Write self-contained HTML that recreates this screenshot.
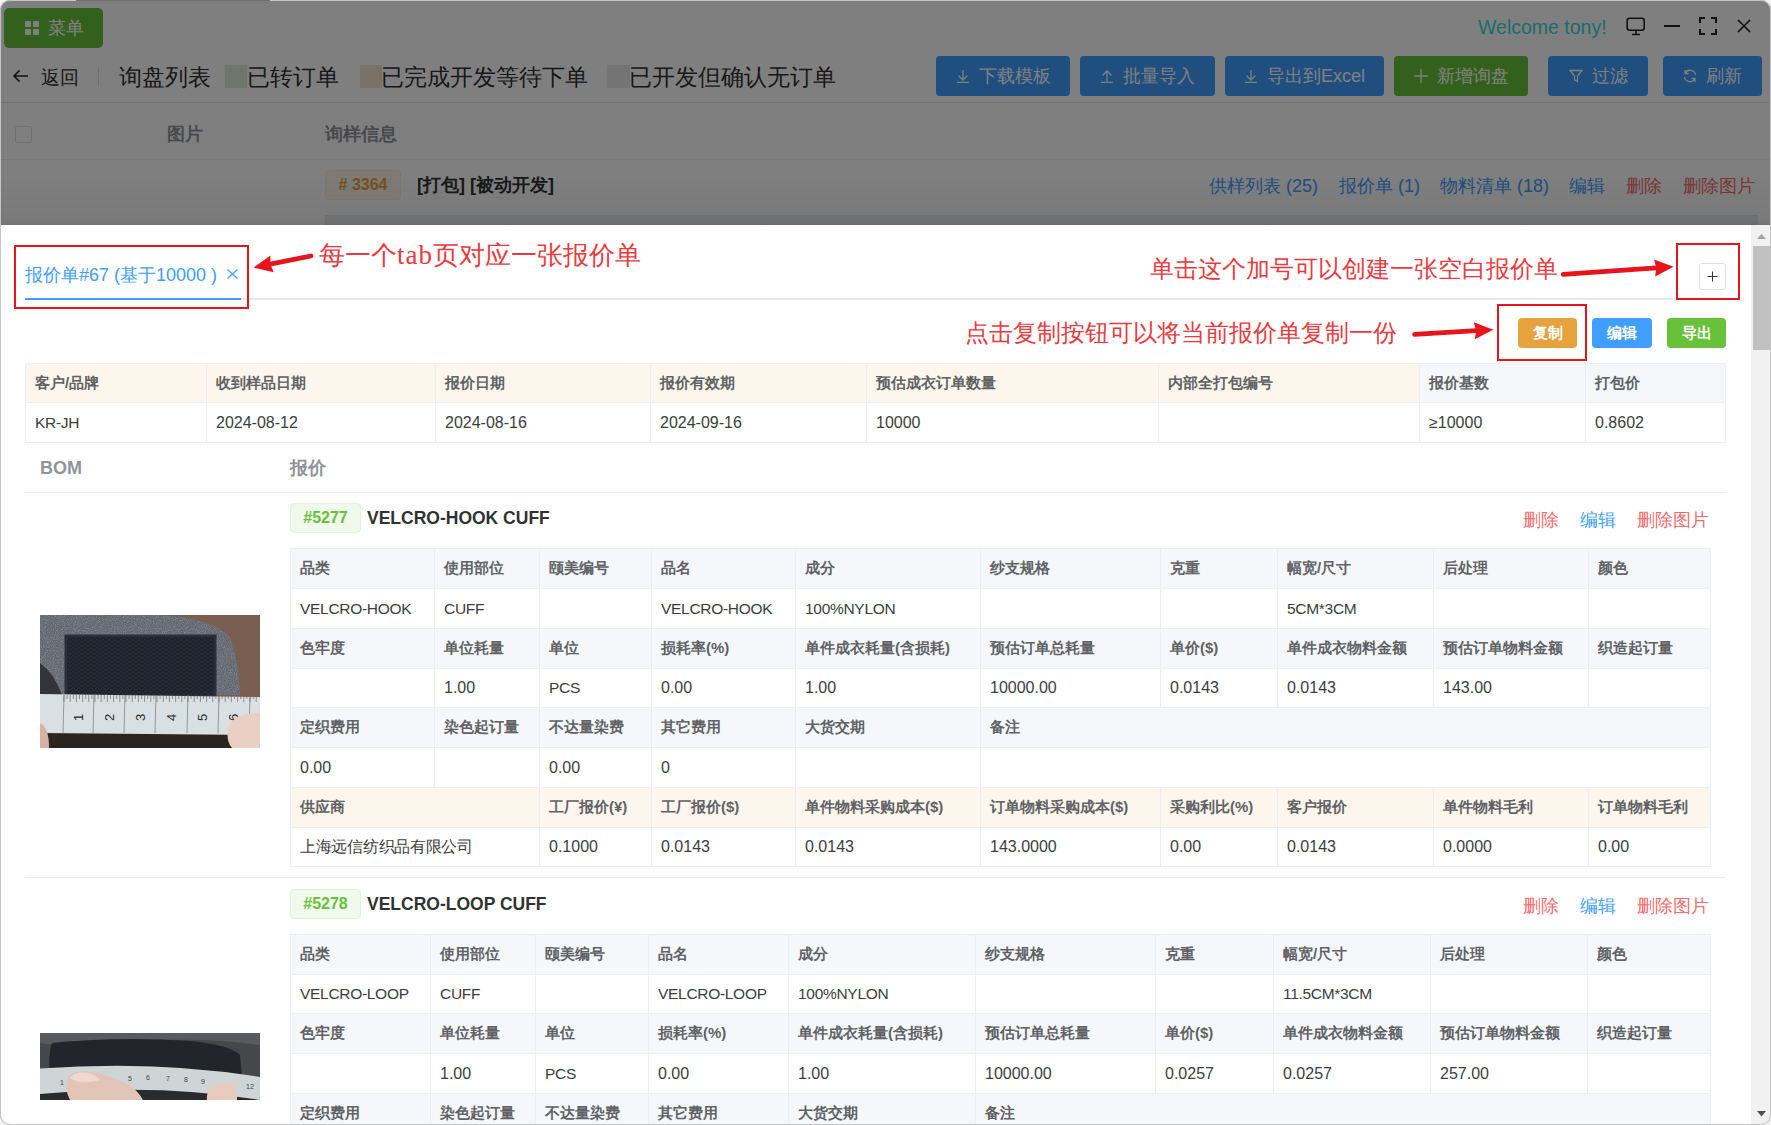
<!DOCTYPE html><html><head><meta charset="utf-8"><style>
*{box-sizing:border-box;margin:0;padding:0}
html,body{width:1771px;height:1125px;overflow:hidden;background:#f2f2f2;font-family:"Liberation Sans",sans-serif}
.abs{position:absolute}
#win{position:absolute;left:0;top:0;width:1771px;height:1125px;border-radius:10px;overflow:hidden;background:#fff}
#frame{position:absolute;left:0;top:0;width:1771px;height:1125px;border:1px solid #c4c4c4;border-radius:10px}
.t{position:absolute;white-space:nowrap;line-height:1}
.btn{position:absolute;border-radius:4px;color:#fff;display:flex;align-items:center;justify-content:center;font-size:18px;white-space:nowrap}
.cell{position:absolute;display:flex;align-items:center;white-space:nowrap;overflow:hidden;color:#606266;padding-left:9px}
.hd{font-weight:bold;font-size:15px}
.dt{font-size:16px}
.lnk{position:absolute;font-size:18px;white-space:nowrap;line-height:1}
</style></head><body>
<div id="win">
<div class="btn" style="left:4px;top:8px;width:99px;height:40px;background:#67c23a;border-radius:5px;justify-content:flex-start;padding-left:21px"><svg width="14" height="14" style="margin-right:9px"><rect x="0" y="0" width="6" height="6" rx="1" fill="#fff"/><rect x="8" y="0" width="6" height="6" rx="1" fill="#fff"/><rect x="0" y="8" width="6" height="6" rx="1" fill="#fff"/><rect x="8" y="8" width="6" height="6" rx="1" fill="#fff"/></svg><span style="font-size:18px">菜单</span></div>
<div class="t" style="left:1478px;top:18px;font-size:19.5px;color:#3ad9db">Welcome tony!</div>
<svg class="abs" style="left:12px;top:69px" width="17" height="14"><path d="M16 7H2M7.5 1.5L2 7l5.5 5.5" stroke="#222" stroke-width="1.6" fill="none"/></svg>
<div class="t" style="left:41px;top:68px;font-size:19px;color:#303133">返回</div>
<div class="abs" style="left:98px;top:67px;width:1px;height:19px;background:#dcdfe6"></div>
<div class="t" style="left:119px;top:66px;font-size:23px;color:#303133">询盘列表</div>
<div class="abs" style="left:225px;top:65px;width:22px;height:23px;background:#d9f0d3"></div>
<div class="t" style="left:247px;top:66px;font-size:23px;color:#303133">已转订单</div>
<div class="abs" style="left:360px;top:65px;width:22px;height:23px;background:#f5e5d2"></div>
<div class="t" style="left:381px;top:66px;font-size:23px;color:#303133">已完成开发等待下单</div>
<div class="abs" style="left:607px;top:65px;width:23px;height:23px;background:#e8e8e8"></div>
<div class="t" style="left:629px;top:66px;font-size:23px;color:#303133">已开发但确认无订单</div>
<div class="btn" style="left:936px;top:56px;width:134px;height:40px;background:#409eff"><svg width="14" height="14" style="margin-right:9px"><path d="M7 1v10M2.5 6.5L7 11l4.5-4.5M1 13.3h12" stroke="#fff" stroke-width="1.3" fill="none"/></svg><span>下载模板</span></div>
<div class="btn" style="left:1080px;top:56px;width:135px;height:40px;background:#409eff"><svg width="14" height="14" style="margin-right:9px"><path d="M7 12.5V2M2.5 6.5L7 2l4.5 4.5M1 13.3h12" stroke="#fff" stroke-width="1.3" fill="none"/></svg><span>批量导入</span></div>
<div class="btn" style="left:1225px;top:56px;width:159px;height:40px;background:#409eff"><svg width="14" height="14" style="margin-right:9px"><path d="M7 1v10M2.5 6.5L7 11l4.5-4.5M1 13.3h12" stroke="#fff" stroke-width="1.3" fill="none"/></svg><span>导出到Excel</span></div>
<div class="btn" style="left:1394px;top:56px;width:134px;height:40px;background:#67c23a"><svg width="14" height="14" style="margin-right:9px"><path d="M7 0v14M0 7h14" stroke="#fff" stroke-width="1.3"/></svg><span>新增询盘</span></div>
<div class="btn" style="left:1548px;top:56px;width:100px;height:40px;background:#409eff"><svg width="14" height="14" style="margin-right:9px"><path d="M1 1.5h12L8.5 7v5.5l-3-1.5V7z" stroke="#fff" stroke-width="1.3" fill="none" stroke-linejoin="round"/></svg><span>过滤</span></div>
<div class="btn" style="left:1663px;top:56px;width:99px;height:40px;background:#409eff"><svg width="14" height="14" style="margin-right:9px"><path d="M12.5 6A5.5 5.5 0 0 0 2.2 4.2M1.5 8a5.5 5.5 0 0 0 10.3 1.8M2 1v3.5h3.5M12 13V9.5H8.5" stroke="#fff" stroke-width="1.3" fill="none"/></svg><span>刷新</span></div>
<div class="abs" style="left:0;top:102px;width:1771px;height:1px;background:#e4e4e4"></div>
<div class="abs" style="left:15px;top:126px;width:17px;height:17px;border:1px solid #dcdfe6;border-radius:2px;background:#fff"></div>
<div class="t" style="left:167px;top:125px;font-size:18px;font-weight:bold;color:#909399">图片</div>
<div class="t" style="left:325px;top:125px;font-size:18px;font-weight:bold;color:#909399">询样信息</div>
<div class="abs" style="left:0;top:159px;width:1771px;height:1px;background:#ebeef5"></div>
<div class="abs" style="left:325px;top:170px;width:76px;height:30px;background:#fdf6ec;border:1px solid #faecd8;border-radius:4px;color:#e6a23c;font-weight:bold;font-size:16px;display:flex;align-items:center;justify-content:center"># 3364</div>
<div class="t" style="left:417px;top:176px;font-size:18px;font-weight:bold;color:#303133">[打包] [被动开发]</div>
<div class="lnk" style="left:1209px;top:177px;color:#409eff">供样列表 (25)</div>
<div class="lnk" style="left:1339px;top:177px;color:#409eff">报价单 (1)</div>
<div class="lnk" style="left:1440px;top:177px;color:#409eff">物料清单 (18)</div>
<div class="lnk" style="left:1569px;top:177px;color:#409eff">编辑</div>
<div class="lnk" style="left:1626px;top:177px;color:#f56c6c">删除</div>
<div class="lnk" style="left:1683px;top:177px;color:#f56c6c">删除图片</div>
<div class="abs" style="left:325px;top:215px;width:1433px;height:12px;background:#eaecf0;border-top:1px solid #e4e6eb"></div>
<div class="abs" style="left:481px;top:215px;width:1px;height:12px;background:#ebeef5"></div>
<div class="abs" style="left:623px;top:215px;width:1px;height:12px;background:#ebeef5"></div>
<div class="abs" style="left:792px;top:215px;width:1px;height:12px;background:#ebeef5"></div>
<div class="abs" style="left:1017px;top:215px;width:1px;height:12px;background:#ebeef5"></div>
<div class="abs" style="left:1202px;top:215px;width:1px;height:12px;background:#ebeef5"></div>
<div class="abs" style="left:1387px;top:215px;width:1px;height:12px;background:#ebeef5"></div>
<div class="abs" style="left:1572px;top:215px;width:1px;height:12px;background:#ebeef5"></div>
<div class="abs" style="left:0;top:0;width:1771px;height:1125px;background:rgba(0,0,0,.5)"></div>
<svg class="abs" style="left:1626px;top:17px" width="20" height="19"><rect x="1.2" y="1.2" width="17" height="12" rx="2.5" stroke="#111" stroke-width="1.6" fill="none"/><path d="M10 13.5v3.5M6 17.5h8" stroke="#111" stroke-width="1.6"/></svg>
<div class="abs" style="left:1664px;top:25px;width:16px;height:2px;background:#111"></div>
<svg class="abs" style="left:1699px;top:17px" width="18" height="18"><path d="M1 6V1h5M12 1h5v5M17 12v5h-5M6 17H1v-5" stroke="#111" stroke-width="2" fill="none"/></svg>
<svg class="abs" style="left:1737px;top:19px" width="14" height="14"><path d="M1 1l12 12M13 1L1 13" stroke="#111" stroke-width="1.7"/></svg>
<div class="abs" style="left:0;top:175px;width:1771px;height:50px;background:linear-gradient(to bottom,rgba(0,0,0,0),rgba(0,0,0,.05))"></div>
<div class="abs" style="left:0;top:225px;width:1771px;height:900px;background:#fff;box-shadow:0 -1px 6px rgba(0,0,0,.08)"></div>
<div class="abs" style="left:1751px;top:225px;width:20px;height:900px;background:#f1f1f1"></div>
<div class="abs" style="left:1753px;top:246px;width:17px;height:104px;background:#c1c1c1"></div>
<svg class="abs" style="left:1756px;top:233px" width="11" height="8"><path d="M5.5 1L10 6H1z" fill="#a3a3a3"/></svg>
<svg class="abs" style="left:1756px;top:1110px" width="11" height="8"><path d="M1 1h9L5.5 6.5z" fill="#505050"/></svg>
<div class="abs" style="left:25px;top:298px;width:1651px;height:2px;background:#e4e7ed"></div>
<div class="abs" style="left:25px;top:298px;width:216px;height:2px;background:#409eff"></div>
<div class="t" style="left:25px;top:266px;font-size:18px;color:#409eff">报价单#67 (基于10000 )</div>
<svg class="abs" style="left:227px;top:269px" width="11" height="10"><path d="M0.5 0.5l10 9M10.5 0.5l-10 9" stroke="#409eff" stroke-width="1.2"/></svg>
<div class="abs" style="left:1699px;top:263px;width:27px;height:27px;border:1px solid #dcdfe6;border-radius:3px;background:#fff"></div>
<svg class="abs" style="left:1707px;top:271px" width="11" height="11"><path d="M5.5 0.5v10M0.5 5.5h10" stroke="#303133" stroke-width="1"/></svg>
<div class="btn" style="left:1518px;top:318px;width:59px;height:30px;background:#e6a23c;font-size:15px;font-weight:bold;border-radius:4px">复制</div>
<div class="btn" style="left:1592px;top:318px;width:60px;height:30px;background:#409eff;font-size:15px;font-weight:bold;border-radius:4px">编辑</div>
<div class="btn" style="left:1667px;top:318px;width:59px;height:30px;background:#67c23a;font-size:15px;font-weight:bold;border-radius:4px">导出</div>
<div class="abs" style="left:14px;top:245px;width:235px;height:64px;border:2px solid #e8141c"></div>
<div class="abs" style="left:1676px;top:243px;width:64px;height:57px;border:2px solid #e8141c"></div>
<div class="abs" style="left:1497px;top:304px;width:90px;height:57px;border:2px solid #e8141c"></div>
<div class="t" style="left:319px;top:242px;font-size:26px;color:#ea3a40">每一个<span style="font-family:Liberation Serif;font-size:27px;letter-spacing:1px">tab</span>页对应一张报价单</div>
<div class="t" style="left:1150px;top:257px;font-size:24px;color:#ea3a40">单击这个加号可以创建一张空白报价单</div>
<div class="t" style="left:965px;top:321px;font-size:24px;color:#ea3a40">点击复制按钮可以将当前报价单复制一份</div>
<svg class="abs" style="left:0;top:0" width="1771" height="1125"><line x1="311.0" y1="256.0" x2="270.3" y2="264.2" stroke="#e8141c" stroke-width="4.8" stroke-linecap="round"/><polygon points="253.5,267.6 270.4,255.5 270.3,264.2 273.8,272.2" fill="#e8141c"/><line x1="1563.2" y1="274.3" x2="1656.4" y2="267.9" stroke="#e8141c" stroke-width="4.8" stroke-linecap="round"/><polygon points="1673.5,266.7 1655.1,276.5 1656.4,267.9 1654.0,259.5" fill="#e8141c"/><line x1="1414.6" y1="334.3" x2="1476.2" y2="330.7" stroke="#e8141c" stroke-width="4.8" stroke-linecap="round"/><polygon points="1493.3,329.7 1474.8,339.3 1476.2,330.7 1473.8,322.3" fill="#e8141c"/></svg>
<div class="cell" style="left:25px;top:363px;width:182px;height:40px;background:#fdf6ec;border:1px solid #ebeef5;font-weight:bold;font-size:15px;color:#606266">客户/品牌</div><div class="cell" style="left:206px;top:363px;width:230px;height:40px;background:#fdf6ec;border:1px solid #ebeef5;font-weight:bold;font-size:15px;color:#606266">收到样品日期</div><div class="cell" style="left:435px;top:363px;width:216px;height:40px;background:#fdf6ec;border:1px solid #ebeef5;font-weight:bold;font-size:15px;color:#606266">报价日期</div><div class="cell" style="left:650px;top:363px;width:217px;height:40px;background:#fdf6ec;border:1px solid #ebeef5;font-weight:bold;font-size:15px;color:#606266">报价有效期</div><div class="cell" style="left:866px;top:363px;width:293px;height:40px;background:#fdf6ec;border:1px solid #ebeef5;font-weight:bold;font-size:15px;color:#606266">预估成衣订单数量</div><div class="cell" style="left:1158px;top:363px;width:262px;height:40px;background:#fdf6ec;border:1px solid #ebeef5;font-weight:bold;font-size:15px;color:#606266">内部全打包编号</div><div class="cell" style="left:1419px;top:363px;width:167px;height:40px;background:#f5f7fa;border:1px solid #ebeef5;font-weight:bold;font-size:15px;color:#606266">报价基数</div><div class="cell" style="left:1585px;top:363px;width:141px;height:40px;background:#f5f7fa;border:1px solid #ebeef5;font-weight:bold;font-size:15px;color:#606266">打包价</div><div class="cell" style="left:25px;top:402px;width:182px;height:41px;background:#fff;border:1px solid #ebeef5;font-size:15.5px;letter-spacing:-0.3px;color:#3c3d40">KR-JH</div><div class="cell" style="left:206px;top:402px;width:230px;height:41px;background:#fff;border:1px solid #ebeef5;font-size:16px;color:#3c3d40">2024-08-12</div><div class="cell" style="left:435px;top:402px;width:216px;height:41px;background:#fff;border:1px solid #ebeef5;font-size:16px;color:#3c3d40">2024-08-16</div><div class="cell" style="left:650px;top:402px;width:217px;height:41px;background:#fff;border:1px solid #ebeef5;font-size:16px;color:#3c3d40">2024-09-16</div><div class="cell" style="left:866px;top:402px;width:293px;height:41px;background:#fff;border:1px solid #ebeef5;font-size:16px;color:#3c3d40">10000</div><div class="cell" style="left:1158px;top:402px;width:262px;height:41px;background:#fff;border:1px solid #ebeef5;font-size:16px;color:#3c3d40"></div><div class="cell" style="left:1419px;top:402px;width:167px;height:41px;background:#fff;border:1px solid #ebeef5;font-size:16px;color:#3c3d40">≥10000</div><div class="cell" style="left:1585px;top:402px;width:141px;height:41px;background:#fff;border:1px solid #ebeef5;font-size:16px;color:#3c3d40">0.8602</div>
<div class="t" style="left:40px;top:459px;font-size:18px;font-weight:bold;color:#909399">BOM</div>
<div class="t" style="left:290px;top:459px;font-size:18px;font-weight:bold;color:#909399">报价</div>
<div class="abs" style="left:25px;top:492px;width:1701px;height:1px;background:#ebeef5"></div>
<div class="abs" style="left:290px;top:503px;width:71px;height:30px;background:#f0f9eb;border:1px solid #e1f3d8;border-radius:4px;color:#67c23a;font-weight:bold;font-size:16px;display:flex;align-items:center;justify-content:center">#5277</div>
<div class="t" style="left:367px;top:510px;font-size:17.5px;font-weight:bold;color:#303133">VELCRO-HOOK CUFF</div>
<div class="lnk" style="left:1523px;top:511px;color:#f56c6c">删除</div>
<div class="lnk" style="left:1580px;top:511px;color:#409eff">编辑</div>
<div class="lnk" style="left:1637px;top:511px;color:#f56c6c">删除图片</div>
<div class="cell" style="left:290px;top:548px;width:145px;height:41px;background:#f5f7fa;border:1px solid #ebeef5;font-weight:bold;font-size:15px;color:#606266">品类</div><div class="cell" style="left:434px;top:548px;width:106px;height:41px;background:#f5f7fa;border:1px solid #ebeef5;font-weight:bold;font-size:15px;color:#606266">使用部位</div><div class="cell" style="left:539px;top:548px;width:113px;height:41px;background:#f5f7fa;border:1px solid #ebeef5;font-weight:bold;font-size:15px;color:#606266">颐美编号</div><div class="cell" style="left:651px;top:548px;width:145px;height:41px;background:#f5f7fa;border:1px solid #ebeef5;font-weight:bold;font-size:15px;color:#606266">品名</div><div class="cell" style="left:795px;top:548px;width:186px;height:41px;background:#f5f7fa;border:1px solid #ebeef5;font-weight:bold;font-size:15px;color:#606266">成分</div><div class="cell" style="left:980px;top:548px;width:181px;height:41px;background:#f5f7fa;border:1px solid #ebeef5;font-weight:bold;font-size:15px;color:#606266">纱支规格</div><div class="cell" style="left:1160px;top:548px;width:118px;height:41px;background:#f5f7fa;border:1px solid #ebeef5;font-weight:bold;font-size:15px;color:#606266">克重</div><div class="cell" style="left:1277px;top:548px;width:157px;height:41px;background:#f5f7fa;border:1px solid #ebeef5;font-weight:bold;font-size:15px;color:#606266">幅宽/尺寸</div><div class="cell" style="left:1433px;top:548px;width:156px;height:41px;background:#f5f7fa;border:1px solid #ebeef5;font-weight:bold;font-size:15px;color:#606266">后处理</div><div class="cell" style="left:1588px;top:548px;width:123px;height:41px;background:#f5f7fa;border:1px solid #ebeef5;font-weight:bold;font-size:15px;color:#606266">颜色</div><div class="cell" style="left:290px;top:588px;width:145px;height:41px;background:#fff;border:1px solid #ebeef5;font-size:15.5px;letter-spacing:-0.3px;color:#3c3d40">VELCRO-HOOK</div><div class="cell" style="left:434px;top:588px;width:106px;height:41px;background:#fff;border:1px solid #ebeef5;font-size:15.5px;letter-spacing:-0.3px;color:#3c3d40">CUFF</div><div class="cell" style="left:539px;top:588px;width:113px;height:41px;background:#fff;border:1px solid #ebeef5;font-size:16px;color:#3c3d40"></div><div class="cell" style="left:651px;top:588px;width:145px;height:41px;background:#fff;border:1px solid #ebeef5;font-size:15.5px;letter-spacing:-0.3px;color:#3c3d40">VELCRO-HOOK</div><div class="cell" style="left:795px;top:588px;width:186px;height:41px;background:#fff;border:1px solid #ebeef5;font-size:15.5px;letter-spacing:-0.3px;color:#3c3d40">100%NYLON</div><div class="cell" style="left:980px;top:588px;width:181px;height:41px;background:#fff;border:1px solid #ebeef5;font-size:16px;color:#3c3d40"></div><div class="cell" style="left:1160px;top:588px;width:118px;height:41px;background:#fff;border:1px solid #ebeef5;font-size:16px;color:#3c3d40"></div><div class="cell" style="left:1277px;top:588px;width:157px;height:41px;background:#fff;border:1px solid #ebeef5;font-size:15.5px;letter-spacing:-0.3px;color:#3c3d40">5CM*3CM</div><div class="cell" style="left:1433px;top:588px;width:156px;height:41px;background:#fff;border:1px solid #ebeef5;font-size:16px;color:#3c3d40"></div><div class="cell" style="left:1588px;top:588px;width:123px;height:41px;background:#fff;border:1px solid #ebeef5;font-size:16px;color:#3c3d40"></div><div class="cell" style="left:290px;top:628px;width:145px;height:41px;background:#f5f7fa;border:1px solid #ebeef5;font-weight:bold;font-size:15px;color:#606266">色牢度</div><div class="cell" style="left:434px;top:628px;width:106px;height:41px;background:#f5f7fa;border:1px solid #ebeef5;font-weight:bold;font-size:15px;color:#606266">单位耗量</div><div class="cell" style="left:539px;top:628px;width:113px;height:41px;background:#f5f7fa;border:1px solid #ebeef5;font-weight:bold;font-size:15px;color:#606266">单位</div><div class="cell" style="left:651px;top:628px;width:145px;height:41px;background:#f5f7fa;border:1px solid #ebeef5;font-weight:bold;font-size:15px;color:#606266">损耗率(%)</div><div class="cell" style="left:795px;top:628px;width:186px;height:41px;background:#f5f7fa;border:1px solid #ebeef5;font-weight:bold;font-size:15px;color:#606266">单件成衣耗量(含损耗)</div><div class="cell" style="left:980px;top:628px;width:181px;height:41px;background:#f5f7fa;border:1px solid #ebeef5;font-weight:bold;font-size:15px;color:#606266">预估订单总耗量</div><div class="cell" style="left:1160px;top:628px;width:118px;height:41px;background:#f5f7fa;border:1px solid #ebeef5;font-weight:bold;font-size:15px;color:#606266">单价($)</div><div class="cell" style="left:1277px;top:628px;width:157px;height:41px;background:#f5f7fa;border:1px solid #ebeef5;font-weight:bold;font-size:15px;color:#606266">单件成衣物料金额</div><div class="cell" style="left:1433px;top:628px;width:156px;height:41px;background:#f5f7fa;border:1px solid #ebeef5;font-weight:bold;font-size:15px;color:#606266">预估订单物料金额</div><div class="cell" style="left:1588px;top:628px;width:123px;height:41px;background:#f5f7fa;border:1px solid #ebeef5;font-weight:bold;font-size:15px;color:#606266">织造起订量</div><div class="cell" style="left:290px;top:668px;width:145px;height:40px;background:#fff;border:1px solid #ebeef5;font-size:16px;color:#3c3d40"></div><div class="cell" style="left:434px;top:668px;width:106px;height:40px;background:#fff;border:1px solid #ebeef5;font-size:16px;color:#3c3d40">1.00</div><div class="cell" style="left:539px;top:668px;width:113px;height:40px;background:#fff;border:1px solid #ebeef5;font-size:15.5px;letter-spacing:-0.3px;color:#3c3d40">PCS</div><div class="cell" style="left:651px;top:668px;width:145px;height:40px;background:#fff;border:1px solid #ebeef5;font-size:16px;color:#3c3d40">0.00</div><div class="cell" style="left:795px;top:668px;width:186px;height:40px;background:#fff;border:1px solid #ebeef5;font-size:16px;color:#3c3d40">1.00</div><div class="cell" style="left:980px;top:668px;width:181px;height:40px;background:#fff;border:1px solid #ebeef5;font-size:16px;color:#3c3d40">10000.00</div><div class="cell" style="left:1160px;top:668px;width:118px;height:40px;background:#fff;border:1px solid #ebeef5;font-size:16px;color:#3c3d40">0.0143</div><div class="cell" style="left:1277px;top:668px;width:157px;height:40px;background:#fff;border:1px solid #ebeef5;font-size:16px;color:#3c3d40">0.0143</div><div class="cell" style="left:1433px;top:668px;width:156px;height:40px;background:#fff;border:1px solid #ebeef5;font-size:16px;color:#3c3d40">143.00</div><div class="cell" style="left:1588px;top:668px;width:123px;height:40px;background:#fff;border:1px solid #ebeef5;font-size:16px;color:#3c3d40"></div><div class="cell" style="left:290px;top:707px;width:145px;height:41px;background:#f5f7fa;border:1px solid #ebeef5;font-weight:bold;font-size:15px;color:#606266">定织费用</div><div class="cell" style="left:434px;top:707px;width:106px;height:41px;background:#f5f7fa;border:1px solid #ebeef5;font-weight:bold;font-size:15px;color:#606266">染色起订量</div><div class="cell" style="left:539px;top:707px;width:113px;height:41px;background:#f5f7fa;border:1px solid #ebeef5;font-weight:bold;font-size:15px;color:#606266">不达量染费</div><div class="cell" style="left:651px;top:707px;width:145px;height:41px;background:#f5f7fa;border:1px solid #ebeef5;font-weight:bold;font-size:15px;color:#606266">其它费用</div><div class="cell" style="left:795px;top:707px;width:186px;height:41px;background:#f5f7fa;border:1px solid #ebeef5;font-weight:bold;font-size:15px;color:#606266">大货交期</div><div class="cell" style="left:980px;top:707px;width:731px;height:41px;background:#f5f7fa;border:1px solid #ebeef5;font-weight:bold;font-size:15px;color:#606266">备注</div><div class="cell" style="left:290px;top:747px;width:145px;height:41px;background:#fff;border:1px solid #ebeef5;font-size:16px;color:#3c3d40">0.00</div><div class="cell" style="left:434px;top:747px;width:106px;height:41px;background:#fff;border:1px solid #ebeef5;font-size:16px;color:#3c3d40"></div><div class="cell" style="left:539px;top:747px;width:113px;height:41px;background:#fff;border:1px solid #ebeef5;font-size:16px;color:#3c3d40">0.00</div><div class="cell" style="left:651px;top:747px;width:145px;height:41px;background:#fff;border:1px solid #ebeef5;font-size:16px;color:#3c3d40">0</div><div class="cell" style="left:795px;top:747px;width:186px;height:41px;background:#fff;border:1px solid #ebeef5;font-size:16px;color:#3c3d40"></div><div class="cell" style="left:980px;top:747px;width:731px;height:41px;background:#fff;border:1px solid #ebeef5;font-size:16px;color:#3c3d40"></div><div class="cell" style="left:290px;top:787px;width:250px;height:41px;background:#fdf6ec;border:1px solid #ebeef5;font-weight:bold;font-size:15px;color:#606266">供应商</div><div class="cell" style="left:539px;top:787px;width:113px;height:41px;background:#fdf6ec;border:1px solid #ebeef5;font-weight:bold;font-size:15px;color:#606266">工厂报价(¥)</div><div class="cell" style="left:651px;top:787px;width:145px;height:41px;background:#fdf6ec;border:1px solid #ebeef5;font-weight:bold;font-size:15px;color:#606266">工厂报价($)</div><div class="cell" style="left:795px;top:787px;width:186px;height:41px;background:#fdf6ec;border:1px solid #ebeef5;font-weight:bold;font-size:15px;color:#606266">单件物料采购成本($)</div><div class="cell" style="left:980px;top:787px;width:181px;height:41px;background:#fdf6ec;border:1px solid #ebeef5;font-weight:bold;font-size:15px;color:#606266">订单物料采购成本($)</div><div class="cell" style="left:1160px;top:787px;width:118px;height:41px;background:#fdf6ec;border:1px solid #ebeef5;font-weight:bold;font-size:15px;color:#606266">采购利比(%)</div><div class="cell" style="left:1277px;top:787px;width:157px;height:41px;background:#fdf6ec;border:1px solid #ebeef5;font-weight:bold;font-size:15px;color:#606266">客户报价</div><div class="cell" style="left:1433px;top:787px;width:156px;height:41px;background:#fdf6ec;border:1px solid #ebeef5;font-weight:bold;font-size:15px;color:#606266">单件物料毛利</div><div class="cell" style="left:1588px;top:787px;width:123px;height:41px;background:#fdf6ec;border:1px solid #ebeef5;font-weight:bold;font-size:15px;color:#606266">订单物料毛利</div><div class="cell" style="left:290px;top:827px;width:250px;height:40px;background:#fff;border:1px solid #ebeef5;font-size:15.5px;letter-spacing:-0.3px;color:#3c3d40">上海远信纺织品有限公司</div><div class="cell" style="left:539px;top:827px;width:113px;height:40px;background:#fff;border:1px solid #ebeef5;font-size:16px;color:#3c3d40">0.1000</div><div class="cell" style="left:651px;top:827px;width:145px;height:40px;background:#fff;border:1px solid #ebeef5;font-size:16px;color:#3c3d40">0.0143</div><div class="cell" style="left:795px;top:827px;width:186px;height:40px;background:#fff;border:1px solid #ebeef5;font-size:16px;color:#3c3d40">0.0143</div><div class="cell" style="left:980px;top:827px;width:181px;height:40px;background:#fff;border:1px solid #ebeef5;font-size:16px;color:#3c3d40">143.0000</div><div class="cell" style="left:1160px;top:827px;width:118px;height:40px;background:#fff;border:1px solid #ebeef5;font-size:16px;color:#3c3d40">0.00</div><div class="cell" style="left:1277px;top:827px;width:157px;height:40px;background:#fff;border:1px solid #ebeef5;font-size:16px;color:#3c3d40">0.0143</div><div class="cell" style="left:1433px;top:827px;width:156px;height:40px;background:#fff;border:1px solid #ebeef5;font-size:16px;color:#3c3d40">0.0000</div><div class="cell" style="left:1588px;top:827px;width:123px;height:40px;background:#fff;border:1px solid #ebeef5;font-size:16px;color:#3c3d40">0.00</div>
<div class="abs" style="left:25px;top:877px;width:1701px;height:1px;background:#ebeef5"></div>
<div class="abs" style="left:290px;top:889px;width:71px;height:30px;background:#f0f9eb;border:1px solid #e1f3d8;border-radius:4px;color:#67c23a;font-weight:bold;font-size:16px;display:flex;align-items:center;justify-content:center">#5278</div>
<div class="t" style="left:367px;top:896px;font-size:17.5px;font-weight:bold;color:#303133">VELCRO-LOOP CUFF</div>
<div class="lnk" style="left:1523px;top:897px;color:#f56c6c">删除</div>
<div class="lnk" style="left:1580px;top:897px;color:#409eff">编辑</div>
<div class="lnk" style="left:1637px;top:897px;color:#f56c6c">删除图片</div>
<div class="cell" style="left:290px;top:934px;width:141px;height:41px;background:#f5f7fa;border:1px solid #ebeef5;font-weight:bold;font-size:15px;color:#606266">品类</div><div class="cell" style="left:430px;top:934px;width:106px;height:41px;background:#f5f7fa;border:1px solid #ebeef5;font-weight:bold;font-size:15px;color:#606266">使用部位</div><div class="cell" style="left:535px;top:934px;width:114px;height:41px;background:#f5f7fa;border:1px solid #ebeef5;font-weight:bold;font-size:15px;color:#606266">颐美编号</div><div class="cell" style="left:648px;top:934px;width:141px;height:41px;background:#f5f7fa;border:1px solid #ebeef5;font-weight:bold;font-size:15px;color:#606266">品名</div><div class="cell" style="left:788px;top:934px;width:188px;height:41px;background:#f5f7fa;border:1px solid #ebeef5;font-weight:bold;font-size:15px;color:#606266">成分</div><div class="cell" style="left:975px;top:934px;width:181px;height:41px;background:#f5f7fa;border:1px solid #ebeef5;font-weight:bold;font-size:15px;color:#606266">纱支规格</div><div class="cell" style="left:1155px;top:934px;width:119px;height:41px;background:#f5f7fa;border:1px solid #ebeef5;font-weight:bold;font-size:15px;color:#606266">克重</div><div class="cell" style="left:1273px;top:934px;width:158px;height:41px;background:#f5f7fa;border:1px solid #ebeef5;font-weight:bold;font-size:15px;color:#606266">幅宽/尺寸</div><div class="cell" style="left:1430px;top:934px;width:158px;height:41px;background:#f5f7fa;border:1px solid #ebeef5;font-weight:bold;font-size:15px;color:#606266">后处理</div><div class="cell" style="left:1587px;top:934px;width:124px;height:41px;background:#f5f7fa;border:1px solid #ebeef5;font-weight:bold;font-size:15px;color:#606266">颜色</div><div class="cell" style="left:290px;top:974px;width:141px;height:40px;background:#fff;border:1px solid #ebeef5;font-size:15.5px;letter-spacing:-0.3px;color:#3c3d40">VELCRO-LOOP</div><div class="cell" style="left:430px;top:974px;width:106px;height:40px;background:#fff;border:1px solid #ebeef5;font-size:15.5px;letter-spacing:-0.3px;color:#3c3d40">CUFF</div><div class="cell" style="left:535px;top:974px;width:114px;height:40px;background:#fff;border:1px solid #ebeef5;font-size:16px;color:#3c3d40"></div><div class="cell" style="left:648px;top:974px;width:141px;height:40px;background:#fff;border:1px solid #ebeef5;font-size:15.5px;letter-spacing:-0.3px;color:#3c3d40">VELCRO-LOOP</div><div class="cell" style="left:788px;top:974px;width:188px;height:40px;background:#fff;border:1px solid #ebeef5;font-size:15.5px;letter-spacing:-0.3px;color:#3c3d40">100%NYLON</div><div class="cell" style="left:975px;top:974px;width:181px;height:40px;background:#fff;border:1px solid #ebeef5;font-size:16px;color:#3c3d40"></div><div class="cell" style="left:1155px;top:974px;width:119px;height:40px;background:#fff;border:1px solid #ebeef5;font-size:16px;color:#3c3d40"></div><div class="cell" style="left:1273px;top:974px;width:158px;height:40px;background:#fff;border:1px solid #ebeef5;font-size:15.5px;letter-spacing:-0.3px;color:#3c3d40">11.5CM*3CM</div><div class="cell" style="left:1430px;top:974px;width:158px;height:40px;background:#fff;border:1px solid #ebeef5;font-size:16px;color:#3c3d40"></div><div class="cell" style="left:1587px;top:974px;width:124px;height:40px;background:#fff;border:1px solid #ebeef5;font-size:16px;color:#3c3d40"></div><div class="cell" style="left:290px;top:1013px;width:141px;height:41px;background:#f5f7fa;border:1px solid #ebeef5;font-weight:bold;font-size:15px;color:#606266">色牢度</div><div class="cell" style="left:430px;top:1013px;width:106px;height:41px;background:#f5f7fa;border:1px solid #ebeef5;font-weight:bold;font-size:15px;color:#606266">单位耗量</div><div class="cell" style="left:535px;top:1013px;width:114px;height:41px;background:#f5f7fa;border:1px solid #ebeef5;font-weight:bold;font-size:15px;color:#606266">单位</div><div class="cell" style="left:648px;top:1013px;width:141px;height:41px;background:#f5f7fa;border:1px solid #ebeef5;font-weight:bold;font-size:15px;color:#606266">损耗率(%)</div><div class="cell" style="left:788px;top:1013px;width:188px;height:41px;background:#f5f7fa;border:1px solid #ebeef5;font-weight:bold;font-size:15px;color:#606266">单件成衣耗量(含损耗)</div><div class="cell" style="left:975px;top:1013px;width:181px;height:41px;background:#f5f7fa;border:1px solid #ebeef5;font-weight:bold;font-size:15px;color:#606266">预估订单总耗量</div><div class="cell" style="left:1155px;top:1013px;width:119px;height:41px;background:#f5f7fa;border:1px solid #ebeef5;font-weight:bold;font-size:15px;color:#606266">单价($)</div><div class="cell" style="left:1273px;top:1013px;width:158px;height:41px;background:#f5f7fa;border:1px solid #ebeef5;font-weight:bold;font-size:15px;color:#606266">单件成衣物料金额</div><div class="cell" style="left:1430px;top:1013px;width:158px;height:41px;background:#f5f7fa;border:1px solid #ebeef5;font-weight:bold;font-size:15px;color:#606266">预估订单物料金额</div><div class="cell" style="left:1587px;top:1013px;width:124px;height:41px;background:#f5f7fa;border:1px solid #ebeef5;font-weight:bold;font-size:15px;color:#606266">织造起订量</div><div class="cell" style="left:290px;top:1053px;width:141px;height:41px;background:#fff;border:1px solid #ebeef5;font-size:16px;color:#3c3d40"></div><div class="cell" style="left:430px;top:1053px;width:106px;height:41px;background:#fff;border:1px solid #ebeef5;font-size:16px;color:#3c3d40">1.00</div><div class="cell" style="left:535px;top:1053px;width:114px;height:41px;background:#fff;border:1px solid #ebeef5;font-size:15.5px;letter-spacing:-0.3px;color:#3c3d40">PCS</div><div class="cell" style="left:648px;top:1053px;width:141px;height:41px;background:#fff;border:1px solid #ebeef5;font-size:16px;color:#3c3d40">0.00</div><div class="cell" style="left:788px;top:1053px;width:188px;height:41px;background:#fff;border:1px solid #ebeef5;font-size:16px;color:#3c3d40">1.00</div><div class="cell" style="left:975px;top:1053px;width:181px;height:41px;background:#fff;border:1px solid #ebeef5;font-size:16px;color:#3c3d40">10000.00</div><div class="cell" style="left:1155px;top:1053px;width:119px;height:41px;background:#fff;border:1px solid #ebeef5;font-size:16px;color:#3c3d40">0.0257</div><div class="cell" style="left:1273px;top:1053px;width:158px;height:41px;background:#fff;border:1px solid #ebeef5;font-size:16px;color:#3c3d40">0.0257</div><div class="cell" style="left:1430px;top:1053px;width:158px;height:41px;background:#fff;border:1px solid #ebeef5;font-size:16px;color:#3c3d40">257.00</div><div class="cell" style="left:1587px;top:1053px;width:124px;height:41px;background:#fff;border:1px solid #ebeef5;font-size:16px;color:#3c3d40"></div><div class="cell" style="left:290px;top:1093px;width:141px;height:41px;background:#f5f7fa;border:1px solid #ebeef5;font-weight:bold;font-size:15px;color:#606266">定织费用</div><div class="cell" style="left:430px;top:1093px;width:106px;height:41px;background:#f5f7fa;border:1px solid #ebeef5;font-weight:bold;font-size:15px;color:#606266">染色起订量</div><div class="cell" style="left:535px;top:1093px;width:114px;height:41px;background:#f5f7fa;border:1px solid #ebeef5;font-weight:bold;font-size:15px;color:#606266">不达量染费</div><div class="cell" style="left:648px;top:1093px;width:141px;height:41px;background:#f5f7fa;border:1px solid #ebeef5;font-weight:bold;font-size:15px;color:#606266">其它费用</div><div class="cell" style="left:788px;top:1093px;width:188px;height:41px;background:#f5f7fa;border:1px solid #ebeef5;font-weight:bold;font-size:15px;color:#606266">大货交期</div><div class="cell" style="left:975px;top:1093px;width:736px;height:41px;background:#f5f7fa;border:1px solid #ebeef5;font-weight:bold;font-size:15px;color:#606266">备注</div><div class="cell" style="left:290px;top:1133px;width:141px;height:41px;background:#fff;border:1px solid #ebeef5;font-size:16px;color:#3c3d40">0.00</div><div class="cell" style="left:430px;top:1133px;width:106px;height:41px;background:#fff;border:1px solid #ebeef5;font-size:16px;color:#3c3d40"></div><div class="cell" style="left:535px;top:1133px;width:114px;height:41px;background:#fff;border:1px solid #ebeef5;font-size:16px;color:#3c3d40">0.00</div><div class="cell" style="left:648px;top:1133px;width:141px;height:41px;background:#fff;border:1px solid #ebeef5;font-size:16px;color:#3c3d40">0</div><div class="cell" style="left:788px;top:1133px;width:188px;height:41px;background:#fff;border:1px solid #ebeef5;font-size:16px;color:#3c3d40"></div><div class="cell" style="left:975px;top:1133px;width:736px;height:41px;background:#fff;border:1px solid #ebeef5;font-size:16px;color:#3c3d40"></div>
<svg class="abs" style="left:40px;top:615px" width="220" height="133" viewBox="0 0 220 133"><defs><filter id="nz" x="0" y="0" width="100%" height="100%"><feTurbulence type="fractalNoise" baseFrequency="0.9" numOctaves="2" seed="3"/><feColorMatrix values="0 0 0 0 0.45  0 0 0 0 0.5  0 0 0 0 0.62  0 0 0 1.4 -0.55"/><feComposite in2="SourceGraphic" operator="in"/></filter><filter id="nz2" x="0" y="0" width="100%" height="100%"><feTurbulence type="fractalNoise" baseFrequency="1.2" numOctaves="1" seed="9"/><feColorMatrix values="0 0 0 0 0.15  0 0 0 0 0.15  0 0 0 0 0.17  0 0 0 1.6 -0.6"/><feComposite in2="SourceGraphic" operator="in"/></filter><pattern id="hb" width="6" height="4" patternUnits="userSpaceOnUse"><path d="M0 4L3 0L6 4" stroke="#333a48" stroke-width="0.8" fill="none"/></pattern></defs><rect width="220" height="133" fill="#7a5e50"/><path d="M0 0H125Q175 5 190 22Q198 40 200 80H0z" fill="#62666f"/><path d="M0 0H125Q175 5 190 22Q198 40 200 80H0z" fill="#fff" filter="url(#nz)" opacity="0.7"/><path d="M0 0H125Q175 5 190 22Q198 40 200 80H0z" fill="#fff" filter="url(#nz2)" opacity="0.5"/><path d="M0 48Q14 58 22 80H0z" fill="#33353b"/><rect x="26" y="21" width="149" height="60" rx="3" fill="#1d212a"/><rect x="28" y="23" width="145" height="58" fill="url(#hb)" opacity="0.8"/><path d="M26 21h149v60H26z" fill="none" stroke="#2a2f3a" stroke-width="3"/><rect y="110" width="220" height="23" fill="#2b2522"/><path d="M0 79L220 82V120L0 118z" fill="#d9e0e3"/><line x1="24.0" y1="80.0" x2="24.0" y2="87" stroke="#555" stroke-width="0.6"/><line x1="27.1" y1="80.0" x2="27.1" y2="84" stroke="#555" stroke-width="0.6"/><line x1="30.2" y1="80.0" x2="30.2" y2="87" stroke="#555" stroke-width="0.6"/><line x1="33.3" y1="80.0" x2="33.3" y2="84" stroke="#555" stroke-width="0.6"/><line x1="36.4" y1="80.0" x2="36.4" y2="87" stroke="#555" stroke-width="0.6"/><line x1="39.5" y1="80.0" x2="39.5" y2="84" stroke="#555" stroke-width="0.6"/><line x1="42.6" y1="80.1" x2="42.6" y2="87" stroke="#555" stroke-width="0.6"/><line x1="45.7" y1="80.1" x2="45.7" y2="84" stroke="#555" stroke-width="0.6"/><line x1="48.8" y1="80.1" x2="48.8" y2="87" stroke="#555" stroke-width="0.6"/><line x1="51.9" y1="80.1" x2="51.9" y2="84" stroke="#555" stroke-width="0.6"/><line x1="55.0" y1="80.1" x2="55.0" y2="87" stroke="#555" stroke-width="0.6"/><line x1="58.1" y1="80.1" x2="58.1" y2="84" stroke="#555" stroke-width="0.6"/><line x1="61.2" y1="80.1" x2="61.2" y2="87" stroke="#555" stroke-width="0.6"/><line x1="64.3" y1="80.1" x2="64.3" y2="84" stroke="#555" stroke-width="0.6"/><line x1="67.4" y1="80.1" x2="67.4" y2="87" stroke="#555" stroke-width="0.6"/><line x1="70.5" y1="80.2" x2="70.5" y2="84" stroke="#555" stroke-width="0.6"/><line x1="73.6" y1="80.2" x2="73.6" y2="87" stroke="#555" stroke-width="0.6"/><line x1="76.7" y1="80.2" x2="76.7" y2="84" stroke="#555" stroke-width="0.6"/><line x1="79.8" y1="80.2" x2="79.8" y2="87" stroke="#555" stroke-width="0.6"/><line x1="82.9" y1="80.2" x2="82.9" y2="84" stroke="#555" stroke-width="0.6"/><line x1="86.0" y1="80.2" x2="86.0" y2="87" stroke="#555" stroke-width="0.6"/><line x1="89.1" y1="80.2" x2="89.1" y2="84" stroke="#555" stroke-width="0.6"/><line x1="92.2" y1="80.2" x2="92.2" y2="87" stroke="#555" stroke-width="0.6"/><line x1="95.3" y1="80.2" x2="95.3" y2="84" stroke="#555" stroke-width="0.6"/><line x1="98.4" y1="80.2" x2="98.4" y2="87" stroke="#555" stroke-width="0.6"/><line x1="101.5" y1="80.2" x2="101.5" y2="84" stroke="#555" stroke-width="0.6"/><line x1="104.6" y1="80.3" x2="104.6" y2="87" stroke="#555" stroke-width="0.6"/><line x1="107.7" y1="80.3" x2="107.7" y2="84" stroke="#555" stroke-width="0.6"/><line x1="110.8" y1="80.3" x2="110.8" y2="87" stroke="#555" stroke-width="0.6"/><line x1="113.9" y1="80.3" x2="113.9" y2="84" stroke="#555" stroke-width="0.6"/><line x1="117.0" y1="80.3" x2="117.0" y2="87" stroke="#555" stroke-width="0.6"/><line x1="120.1" y1="80.3" x2="120.1" y2="84" stroke="#555" stroke-width="0.6"/><line x1="123.2" y1="80.3" x2="123.2" y2="87" stroke="#555" stroke-width="0.6"/><line x1="126.3" y1="80.3" x2="126.3" y2="84" stroke="#555" stroke-width="0.6"/><line x1="129.4" y1="80.3" x2="129.4" y2="87" stroke="#555" stroke-width="0.6"/><line x1="132.5" y1="80.3" x2="132.5" y2="84" stroke="#555" stroke-width="0.6"/><line x1="135.6" y1="80.4" x2="135.6" y2="87" stroke="#555" stroke-width="0.6"/><line x1="138.7" y1="80.4" x2="138.7" y2="84" stroke="#555" stroke-width="0.6"/><line x1="141.8" y1="80.4" x2="141.8" y2="87" stroke="#555" stroke-width="0.6"/><line x1="144.9" y1="80.4" x2="144.9" y2="84" stroke="#555" stroke-width="0.6"/><line x1="148.0" y1="80.4" x2="148.0" y2="87" stroke="#555" stroke-width="0.6"/><line x1="151.1" y1="80.4" x2="151.1" y2="84" stroke="#555" stroke-width="0.6"/><line x1="154.2" y1="80.4" x2="154.2" y2="87" stroke="#555" stroke-width="0.6"/><line x1="157.3" y1="80.4" x2="157.3" y2="84" stroke="#555" stroke-width="0.6"/><line x1="160.4" y1="80.4" x2="160.4" y2="87" stroke="#555" stroke-width="0.6"/><line x1="163.5" y1="80.5" x2="163.5" y2="84" stroke="#555" stroke-width="0.6"/><line x1="166.6" y1="80.5" x2="166.6" y2="87" stroke="#555" stroke-width="0.6"/><line x1="169.7" y1="80.5" x2="169.7" y2="84" stroke="#555" stroke-width="0.6"/><line x1="172.8" y1="80.5" x2="172.8" y2="87" stroke="#555" stroke-width="0.6"/><line x1="175.9" y1="80.5" x2="175.9" y2="84" stroke="#555" stroke-width="0.6"/><line x1="179.0" y1="80.5" x2="179.0" y2="87" stroke="#555" stroke-width="0.6"/><line x1="182.1" y1="80.5" x2="182.1" y2="84" stroke="#555" stroke-width="0.6"/><line x1="185.2" y1="80.5" x2="185.2" y2="87" stroke="#555" stroke-width="0.6"/><line x1="188.3" y1="80.5" x2="188.3" y2="84" stroke="#555" stroke-width="0.6"/><line x1="191.4" y1="80.5" x2="191.4" y2="87" stroke="#555" stroke-width="0.6"/><line x1="194.5" y1="80.5" x2="194.5" y2="84" stroke="#555" stroke-width="0.6"/><line x1="197.6" y1="80.6" x2="197.6" y2="87" stroke="#555" stroke-width="0.6"/><line x1="200.7" y1="80.6" x2="200.7" y2="84" stroke="#555" stroke-width="0.6"/><line x1="203.8" y1="80.6" x2="203.8" y2="87" stroke="#555" stroke-width="0.6"/><line x1="206.9" y1="80.6" x2="206.9" y2="84" stroke="#555" stroke-width="0.6"/><line x1="210.0" y1="80.6" x2="210.0" y2="87" stroke="#555" stroke-width="0.6"/><line x1="213.1" y1="80.6" x2="213.1" y2="84" stroke="#555" stroke-width="0.6"/><line x1="216.2" y1="80.6" x2="216.2" y2="87" stroke="#555" stroke-width="0.6"/><line x1="24" y1="80" x2="23" y2="118" stroke="#777" stroke-width="0.7"/><line x1="54" y1="80" x2="53" y2="118" stroke="#777" stroke-width="0.7"/><line x1="85" y1="80" x2="84" y2="118" stroke="#777" stroke-width="0.7"/><line x1="116" y1="80" x2="115" y2="118" stroke="#777" stroke-width="0.7"/><line x1="148" y1="80" x2="147" y2="118" stroke="#777" stroke-width="0.7"/><line x1="179" y1="80" x2="178" y2="118" stroke="#777" stroke-width="0.7"/><line x1="210" y1="80" x2="209" y2="118" stroke="#777" stroke-width="0.7"/><text x="43" y="106" font-size="13" fill="#2a2a2a" transform="rotate(-90 43 106)" font-family="Liberation Sans">1</text><text x="74" y="106" font-size="13" fill="#2a2a2a" transform="rotate(-90 74 106)" font-family="Liberation Sans">2</text><text x="105" y="106" font-size="13" fill="#2a2a2a" transform="rotate(-90 105 106)" font-family="Liberation Sans">3</text><text x="136" y="106" font-size="13" fill="#2a2a2a" transform="rotate(-90 136 106)" font-family="Liberation Sans">4</text><text x="167" y="106" font-size="13" fill="#2a2a2a" transform="rotate(-90 167 106)" font-family="Liberation Sans">5</text><text x="198" y="106" font-size="13" fill="#2a2a2a" transform="rotate(-90 198 106)" font-family="Liberation Sans">6</text><path d="M0 108Q9 112 9 133H0z" fill="#d7b2a2"/><path d="M220 98Q192 98 188 114Q186 126 192 133H220z" fill="#ead0c4"/></svg>
<svg class="abs" style="left:40px;top:1033px" width="220" height="67" viewBox="0 0 220 67"><rect width="220" height="67" fill="#46474b"/><path d="M0 0H220V12Q150 2 60 10Q20 14 0 10z" fill="#5a5b5f"/><path d="M12 10Q80 3 150 8Q190 12 200 22L202 44H10Q8 20 12 10z" fill="#22252c"/><path d="M0 58Q100 48 220 67H0z" fill="#2a2b31"/><path d="M0 35.5Q118 27 220 44V67Q118 50 0 61z" fill="#cfd4d6"/><text x="20" y="52" font-size="7" fill="#444" font-family="Liberation Sans">1</text><text x="88" y="48" font-size="7" fill="#444" font-family="Liberation Sans">5</text><text x="106" y="47" font-size="7" fill="#444" font-family="Liberation Sans">6</text><text x="126" y="48" font-size="7" fill="#444" font-family="Liberation Sans">7</text><text x="144" y="49" font-size="7" fill="#444" font-family="Liberation Sans">8</text><text x="161" y="51" font-size="7" fill="#444" font-family="Liberation Sans">9</text><text x="206" y="56" font-size="7" fill="#444" font-family="Liberation Sans">12</text><path d="M27 48Q30 37 45 38Q60 40 75 46Q95 52 103 67H30Q25 58 27 48z" fill="#e3c5b8"/><path d="M30 45Q36 38 48 40Q56 42 60 47Q50 50 38 49z" fill="#eed8cf"/><path d="M170 56Q178 48 192 50Q198 56 197 67H167Q166 61 170 56z" fill="#e6cbbe"/></svg>
</div>
<div id="frame"></div>
<div class="abs" style="left:76px;top:0;width:194px;height:1px;background:#6e6e6e"></div>
</body></html>
